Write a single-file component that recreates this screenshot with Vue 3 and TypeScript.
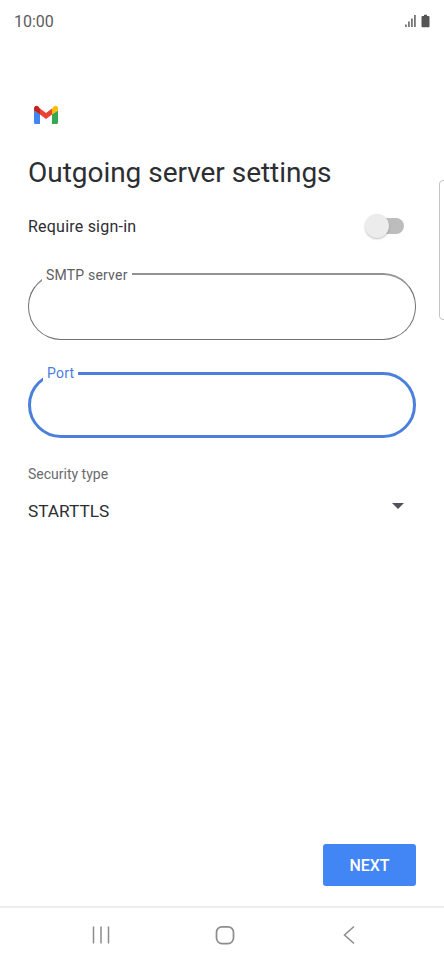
<template>
  <div class="screen">
    <!-- status bar -->
    <div class="status">
      <span class="time">10:00</span>
      <svg class="status-icons" width="26" height="14" viewBox="0 0 26 14">
        <rect x="0" y="10.500" width="1.800" height="2.500" fill="#777" />
        <rect x="3" y="7.500" width="1.800" height="5.500" fill="#777" />
        <rect x="6" y="4.500" width="1.800" height="8.500" fill="#777" />
        <rect x="9" y="1" width="1.800" height="12" fill="#777" />
        <path d="M17 1.800h1.500V0.500h3v1.300H23a1 1 0 0 1 1 1V12a1 1 0 0 1-1 1h-6a1 1 0 0 1-1-1V2.800a1 1 0 0 1 1-1z" transform="translate(0.500 0.300)" fill="#555" />
      </svg>
    </div>

    <div class="content">
      <svg class="gmail" width="26" height="20" viewBox="0 0 26 20">
        <path d="M1 5.500v12a1.600 1.600 0 0 0 1.600 1.600H7V9z" fill="#4285f4" />
        <path d="M19 9v10.100h4.400a1.600 1.600 0 0 0 1.600-1.600V5.500z" fill="#34a853" />
        <path d="M7 9.500V3.500L13 8l6-4.500v6L13 14z" fill="#ea4335" />
        <path d="M19 3.500V9.500l6-4V3.200C25 1.200 22.700 0 21 1.300z" fill="#fbbc04" />
        <path d="M1 3.200v2.300l6 4V3.500L5 1.300C3.300 0 1 1.200 1 3.200z" fill="#c5221f" />
      </svg>

      <h1 class="title">Outgoing server settings</h1>

      <div class="row">
        <span class="row-label">Require sign-in</span>
        <span class="switch"><span class="knob"></span></span>
      </div>

      <div v-for="f in fields" :key="f.label" class="field" :class="{ active: f.active }">
        <span class="legend">{{ f.label }}</span>
      </div>

      <div class="security-label">Security type</div>
      <div class="select">
        <span>STARTTLS</span>
        <svg width="12" height="6" viewBox="0 0 12 6"><path d="M0 0h12L6 6z" fill="#50535c" /></svg>
      </div>
    </div>

    <div class="actions">
      <button class="next">NEXT</button>
    </div>

    <!-- nav bar -->
    <div class="nav">
      <svg class="nav-menu" width="20" height="20" viewBox="0 0 20 20" fill="none" stroke="#8c8c8c" stroke-width="1.500">
        <path d="M2.500 1.500v17M10 1.500v17M17.500 1.500v17" />
      </svg>
      <svg class="nav-home" width="20" height="20" viewBox="0 0 20 20" fill="none" stroke="#8c8c8c" stroke-width="1.700">
        <rect x="1.500" y="1.800" width="17" height="16.800" rx="5.500" />
      </svg>
      <svg class="nav-back" width="12" height="20" viewBox="0 0 12 20" fill="none" stroke="#8c8c8c" stroke-width="1.500">
        <path d="M11 1.500 1.500 10l9.500 8.500" />
      </svg>
    </div>

    <div class="edge-handle"></div>
  </div>
</template>

<script setup lang="ts">
  const fields = [
    { label: 'SMTP server', active: false },
    { label: 'Port', active: true },
  ];
</script>

<style>
  html,
  body {
    margin: 0;
    background: #fff;
  }
</style>

<style scoped>
  .screen {
    position: relative;
    width: 444px;
    height: 962px;
    display: flex;
    flex-direction: column;
    background: #fff;
    overflow: hidden;
    font-family: Roboto, 'Liberation Sans', sans-serif;
    color: #2c2e32;
  }

  .status {
    height: 42px;
    padding: 0 13px 0 14px;
    display: flex;
    align-items: center;
    justify-content: space-between;
  }

  .time {
    font-size: 16px;
    color: #5c5c5c;
  }

  .content {
    flex: 1;
    padding: 63px 28px 0;
    display: flex;
    flex-direction: column;
  }

  .gmail {
    margin-left: 5px;
  }

  .title {
    margin: 29px 0 0;
    font-size: 28px;
    line-height: 38px;
    font-weight: 400;
    letter-spacing: -0.03px;
  }

  .row {
    margin-top: 21px;
    padding-right: 12px;
    display: flex;
    align-items: center;
    justify-content: space-between;
    height: 26px;
  }

  .row-label {
    font-size: 16px;
    letter-spacing: 0.22px;
  }

  .switch {
    position: relative;
    width: 36px;
    height: 16px;
    border-radius: 8px;
    background: #bdbdbd;
  }

  .knob {
    position: absolute;
    left: -3px;
    top: -4px;
    width: 24px;
    height: 24px;
    border-radius: 50%;
    background: #ececec;
    box-shadow: 0 1px 2px rgba(0, 0, 0, 0.25);
  }

  .field {
    position: relative;
    box-sizing: border-box;
    height: 67px;
    margin-top: 33px;
    border: 1px solid #707074;
    border-top: 2px solid #929296;
    border-radius: 33px;
  }

  .row + .field {
    margin-top: 34px;
  }

  .field.active {
    height: 66px;
    margin-top: 32px;
    border: 3px solid #4a80dc;
  }

  .legend {
    position: absolute;
    left: 13px;
    top: -9px;
    padding: 0 4px;
    background: #fff;
    font-size: 14px;
    line-height: 18px;
    letter-spacing: 0.2px;
    color: #5f6063;
  }

  .field.active .legend {
    left: 12px;
    top: -11px;
    color: #4a80dc;
  }

  .security-label {
    margin-top: 27px;
    font-size: 14px;
    line-height: 18px;
    color: #6a6b6e;
  }

  .select {
    margin-top: 16px;
    padding-right: 12px;
    display: flex;
    justify-content: space-between;
    font-size: 17.250px;
    line-height: 24px;
  }

  .select svg {
    margin-top: 4px;
  }

  .actions {
    padding: 0 28px 20px;
    display: flex;
    justify-content: flex-end;
  }

  .next {
    width: 93px;
    height: 42px;
    border: none;
    border-radius: 3px;
    background: #4285f4;
    color: #fff;
    font-family: inherit;
    font-size: 16px;
    font-weight: 500;
  }

  .nav {
    height: 54px;
    border-top: 2px solid #ececec;
    padding-left: 90.500px;
    display: flex;
    align-items: center;
  }

  .nav-home {
    margin-left: 104px;
  }

  .nav-back {
    margin-left: 108px;
  }

  .edge-handle {
    position: absolute;
    left: 439px;
    top: 180px;
    width: 12px;
    height: 140px;
    box-sizing: border-box;
    border: 1px solid #c4c4c4;
    border-radius: 4px;
    background: #fff;
  }
</style>
